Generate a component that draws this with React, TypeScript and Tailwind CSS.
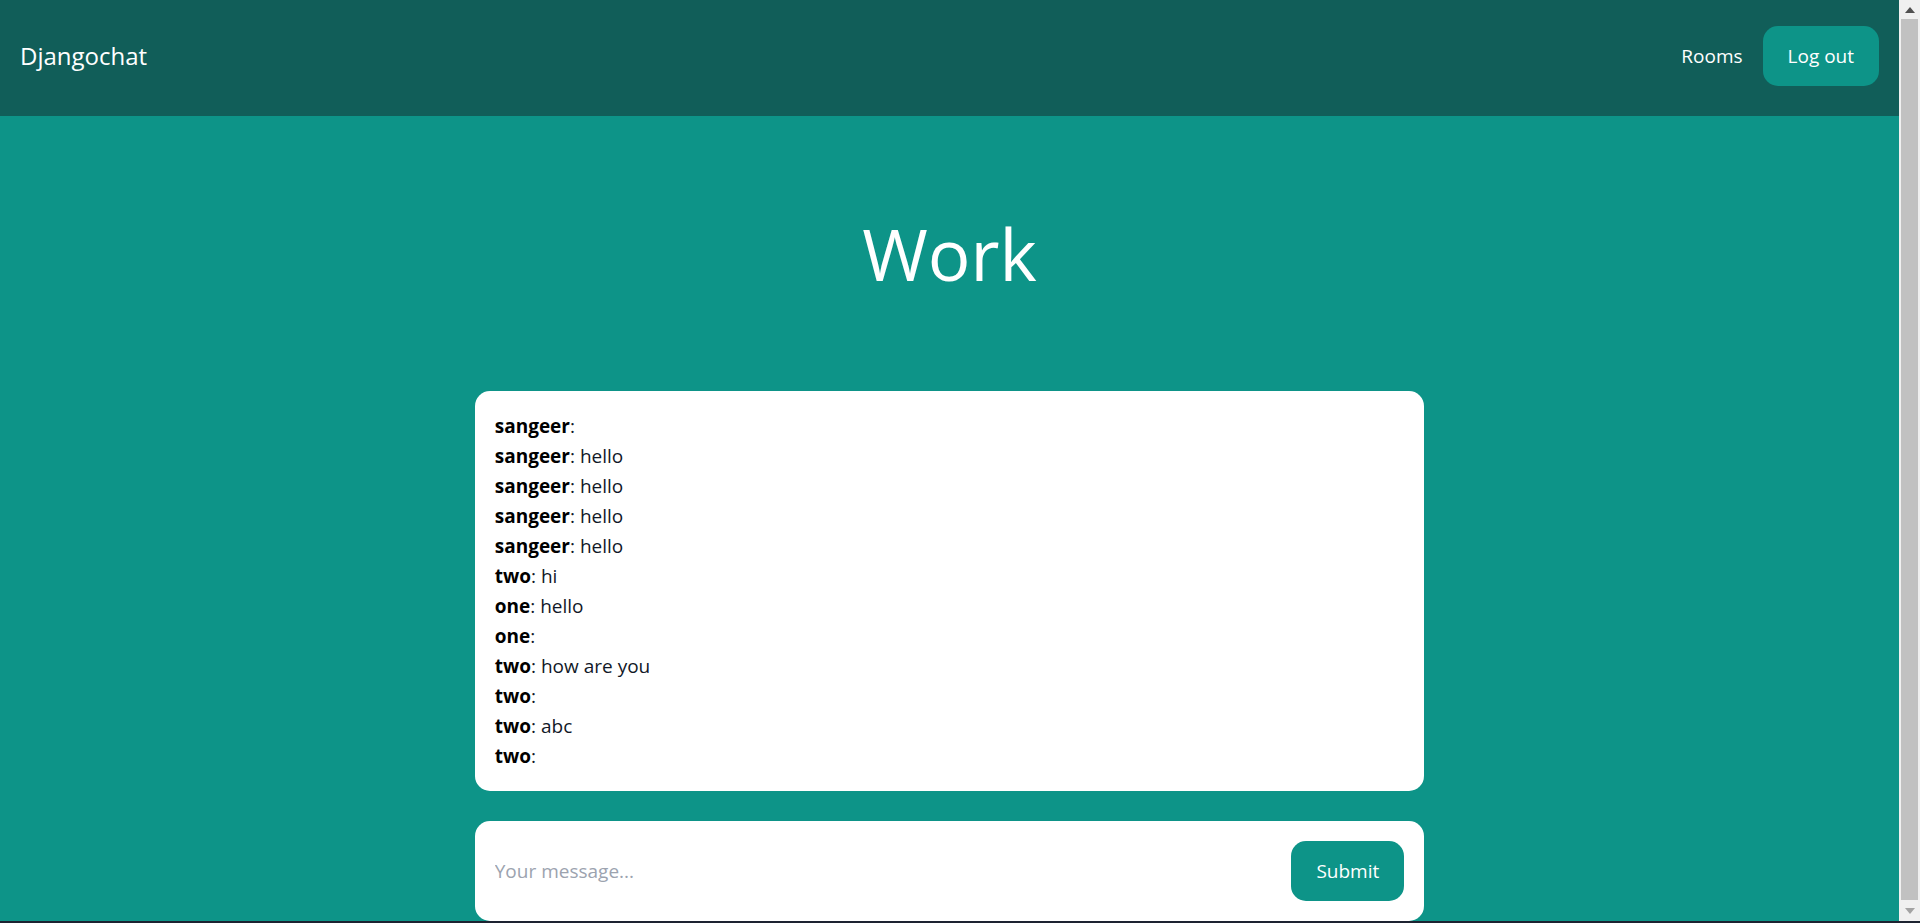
import React from "react";

const messages: [string, string][] = [
  ["sangeer", ""],
  ["sangeer", "hello"],
  ["sangeer", "hello"],
  ["sangeer", "hello"],
  ["sangeer", "hello"],
  ["two", "hi"],
  ["one", "hello"],
  ["one", ""],
  ["two", "how are you"],
  ["two", ""],
  ["two", "abc"],
  ["two", ""],
];

export default function App() {
  return (
    <div className="flex flex-col h-screen overflow-hidden font-['Segoe_UI','Open_Sans',sans-serif]">
      <div className="flex h-[921px] flex-none">
        <div className="flex-1 min-w-0 bg-[#0d9488] overflow-hidden">
          <nav className="flex items-center justify-between h-[116px] pb-[4px] px-5 bg-[#115e59]">
            <a className="text-[24px] leading-[32px] text-white">Djangochat</a>
            <div className="flex items-center">
              <a className="text-[19px] leading-[30px] text-white mr-5">Rooms</a>
              <a className="px-[25px] py-[15px] text-[19px] leading-[30px] text-white bg-[#0d9488] rounded-[15px]">
                Log out
              </a>
            </div>
          </nav>
          <div className="pt-[100px] pb-[100px] text-center">
            <h1 className="text-[71px] leading-[75px] text-white">Work</h1>
          </div>
          <div className="w-1/2 mx-auto p-5 bg-white rounded-[15px] text-[19px] leading-[30px] text-[#111827]">
            {messages.map(([name, msg], i) => (
              <div key={i}>
                <b className="font-bold text-black">{name}</b>: {msg}
              </div>
            ))}
          </div>
          <div className="w-1/2 mx-auto mt-[30px] p-5 bg-white rounded-[15px] flex items-center">
            <input
              className="flex-1 mr-[15px] text-[19px] leading-[30px] outline-none placeholder:text-[#9ca3af] text-[#111827]"
              placeholder="Your message..."
            />
            <button className="px-[25px] py-[15px] text-[19px] leading-[30px] text-white bg-[#0d9488] rounded-[15px]">
              Submit
            </button>
          </div>
        </div>
        <div className="w-[21px] flex-none bg-[#f0f0f0] flex flex-col">
          <div className="h-[19px] flex items-center justify-center">
            <svg width="10" height="6" viewBox="0 0 10 6">
              <path d="M0 6 L5 0 L10 6 Z" fill="#505050" />
            </svg>
          </div>
          <div className="flex-1 mx-[2px] bg-[#c1c1c1]" />
          <div className="h-[21px] flex items-center justify-center">
            <svg width="10" height="6" viewBox="0 0 10 6">
              <path d="M0 0 L10 0 L5 6 Z" fill="#a3a3a3" />
            </svg>
          </div>
        </div>
      </div>
      <div className="h-[2px] flex-none bg-[#1d2331]" />
    </div>
  );
}
